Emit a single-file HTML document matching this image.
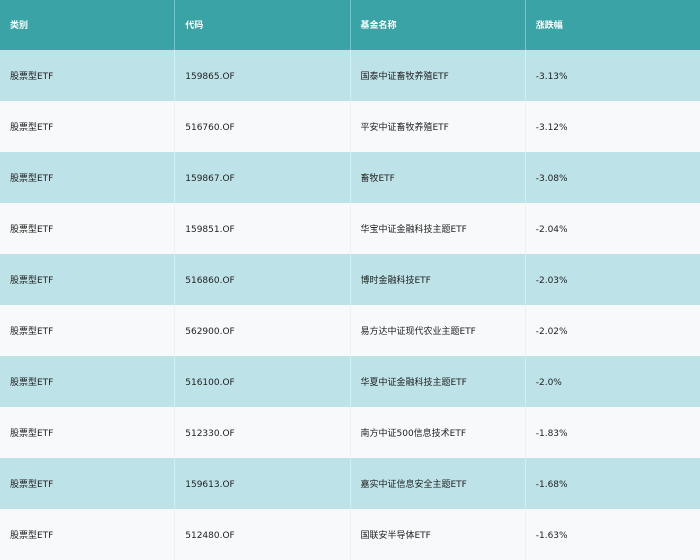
<!DOCTYPE html><html><head><meta charset="utf-8"><style>
body{margin:0;width:700px;height:560px;overflow:hidden;background:#f8f9fb;font-family:"DejaVu Sans","Noto Sans CJK SC",sans-serif;font-size:9px;color:#222}
.r{display:flex;height:51px}
.r div{width:165px;padding-left:10px;padding-top:3px;line-height:48px;height:48px;overflow:hidden;white-space:nowrap;border-right:1px solid rgba(255,255,255,.35)}
.r div:last-child{border-right:none}
.h{background:#3aa3a6;color:#fff;font-weight:bold;height:50px}
.h div{line-height:47px;height:47px}
.a{background:#bde3e8}
.b{background:#f8f9fb}
.b div{border-right:1px solid #eef0f2}
</style></head><body>
<div class="r h"><div>类别</div><div>代码</div><div>基金名称</div><div>涨跌幅</div></div>
<div class="r a"><div>股票型ETF</div><div>159865.OF</div><div>国泰中证畜牧养殖ETF</div><div>-3.13%</div></div>
<div class="r b"><div>股票型ETF</div><div>516760.OF</div><div>平安中证畜牧养殖ETF</div><div>-3.12%</div></div>
<div class="r a"><div>股票型ETF</div><div>159867.OF</div><div>畜牧ETF</div><div>-3.08%</div></div>
<div class="r b"><div>股票型ETF</div><div>159851.OF</div><div>华宝中证金融科技主题ETF</div><div>-2.04%</div></div>
<div class="r a"><div>股票型ETF</div><div>516860.OF</div><div>博时金融科技ETF</div><div>-2.03%</div></div>
<div class="r b"><div>股票型ETF</div><div>562900.OF</div><div>易方达中证现代农业主题ETF</div><div>-2.02%</div></div>
<div class="r a"><div>股票型ETF</div><div>516100.OF</div><div>华夏中证金融科技主题ETF</div><div>-2.0%</div></div>
<div class="r b"><div>股票型ETF</div><div>512330.OF</div><div>南方中证500信息技术ETF</div><div>-1.83%</div></div>
<div class="r a"><div>股票型ETF</div><div>159613.OF</div><div>嘉实中证信息安全主题ETF</div><div>-1.68%</div></div>
<div class="r b"><div>股票型ETF</div><div>512480.OF</div><div>国联安半导体ETF</div><div>-1.63%</div></div>
</body></html>
